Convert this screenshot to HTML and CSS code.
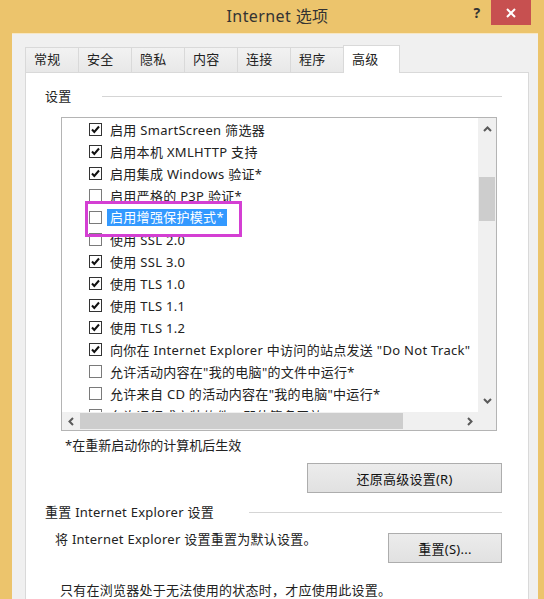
FILE: index.html
```html
<!DOCTYPE html>
<html lang="zh-CN">

<head>
  <meta charset="UTF-8">
  <title>Internet 选项</title>
  <link rel="stylesheet" href="styles.css">
</head>

<body>
  <div class="window">
    <div class="titlebar">
      <div class="title">Internet 选项</div>
      <div class="help">?</div>
      <div class="close">
        <svg width="10" height="10" viewBox="0 0 10 10"><path d="M1 1 L9 9 M9 1 L1 9" stroke="#fff" stroke-width="2"/></svg>
      </div>
    </div>

    <div class="dialog">
      <div class="tabs">
        <div class="tab">常规</div>
        <div class="tab">安全</div>
        <div class="tab">隐私</div>
        <div class="tab">内容</div>
        <div class="tab">连接</div>
        <div class="tab">程序</div>
        <div class="tab active">高级</div>
      </div>

      <div class="page">
        <!-- 设置 -->
        <div class="legend first">
          <span>设置</span>
          <div class="rule"></div>
        </div>

        <div class="listbox">
          <div class="list-content">
            <div class="row"><span class="check on"></span>启用 SmartScreen 筛选器</div>
            <div class="row"><span class="check on"></span>启用本机 XMLHTTP 支持</div>
            <div class="row"><span class="check on"></span>启用集成 Windows 验证*</div>
            <div class="row"><span class="check"></span>启用严格的 P3P 验证*</div>
            <div class="row"><span class="check"></span><span class="selected">启用增强保护模式*</span></div>
            <div class="row"><span class="check"></span>使用 SSL 2.0</div>
            <div class="row"><span class="check on"></span>使用 SSL 3.0</div>
            <div class="row"><span class="check on"></span>使用 TLS 1.0</div>
            <div class="row"><span class="check on"></span>使用 TLS 1.1</div>
            <div class="row"><span class="check on"></span>使用 TLS 1.2</div>
            <div class="row"><span class="check on"></span>向你在 Internet Explorer 中访问的站点发送 "Do Not Track"</div>
            <div class="row"><span class="check"></span>允许活动内容在"我的电脑"的文件中运行*</div>
            <div class="row"><span class="check"></span>允许来自 CD 的活动内容在"我的电脑"中运行*</div>
            <div class="row"><span class="check"></span>允许运行或安装软件，即使签名无效</div>
            <div class="mark"></div>
          </div>

          <div class="vscroll">
            <div class="arrow">
              <svg width="9" height="6" viewBox="0 0 9 6"><path d="M1 5 L4.5 1.5 L8 5" fill="none" stroke="#5a5a5a" stroke-width="2"/></svg>
            </div>
            <div class="vtrack"><div class="vthumb"></div></div>
            <div class="arrow">
              <svg width="9" height="6" viewBox="0 0 9 6"><path d="M1 1 L4.5 4.5 L8 1" fill="none" stroke="#5a5a5a" stroke-width="2"/></svg>
            </div>
          </div>

          <div class="hscroll">
            <div class="arrow">
              <svg width="6" height="9" viewBox="0 0 6 9"><path d="M5 1 L1.5 4.5 L5 8" fill="none" stroke="#5a5a5a" stroke-width="2"/></svg>
            </div>
            <div class="htrack"><div class="hthumb"></div></div>
            <div class="arrow">
              <svg width="6" height="9" viewBox="0 0 6 9"><path d="M1 1 L4.5 4.5 L1 8" fill="none" stroke="#5a5a5a" stroke-width="2"/></svg>
            </div>
          </div>

          <div class="corner"></div>
        </div>

        <div class="note">*在重新启动你的计算机后生效</div>
        <button class="btn restore">还原高级设置(R)</button>

        <!-- 重置 -->
        <div class="legend second">
          <span>重置 Internet Explorer 设置</span>
          <div class="rule"></div>
        </div>
        <div class="reset-row">
          <div class="reset-text">将 Internet Explorer 设置重置为默认设置。</div>
          <button class="btn reset">重置(S)...</button>
        </div>
        <div class="warn">只有在浏览器处于无法使用的状态时，才应使用此设置。</div>
      </div>
    </div>
  </div>
</body>

</html>
```

FILE: styles.css
```css
body {
  margin: 0;
  background-color: #ecc46c;
  font-family: "Noto Sans", "Noto Sans CJK SC", sans-serif;
  font-size: 13px;
  letter-spacing: 0.25px;
  color: #222;
}

.window {
  width: 544px;
  height: 599px;
  overflow: hidden;
  background-color: #ecc46c;
}

/* title bar */

.titlebar {
  display: flex;
  height: 33px;
  padding-right: 13px;
}

.title {
  flex: 1;
  padding-left: 92px;
  text-align: center;
  line-height: 33px;
  font-size: 16px;
  letter-spacing: 0.4px;
  color: #333;
}

.help {
  width: 28px;
  line-height: 25px;
  text-align: center;
  font-weight: bold;
  font-size: 14px;
  color: #333;
}

.close {
  width: 40px;
  height: 25px;
  background-color: #c75050;
  display: flex;
  align-items: center;
  justify-content: center;
}

/* dialog body */

.dialog {
  margin: 0 6px 0 12px;
  height: 566px;
  background-color: #f0f0f0;
  padding: 11px 9px 0 13px;
  border-top: 1px solid #f7e7c4;
}

.tabs {
  display: flex;
  align-items: flex-end;
  height: 27px;
  position: relative;
  z-index: 1;
}

.tab {
  box-sizing: border-box;
  width: 54px;
  height: 25px;
  margin-left: -1px;
  padding-left: 8px;
  line-height: 23px;
  border: 1px solid #d9d9d9;
  border-bottom: none;
  background: linear-gradient(#f2f2f2, #e8e8e8);
  color: #222;
}

.tab:first-child {
  margin-left: 0;
}

.tab.active {
  width: 57px;
  height: 28px;
  margin-bottom: -1px;
  background: #fff;
  line-height: 26px;
}

.page {
  height: 600px;
  background-color: #fff;
  border: 1px solid #d9d9d9;
  padding: 0 26px 0 19px;
}

/* group headings */

.legend {
  display: flex;
  align-items: center;
  height: 18px;
  line-height: 18px;
}

.legend .rule {
  flex: 1;
  height: 1px;
  background-color: #d5d5d5;
}

.legend.first {
  margin-top: 14px;
}

.legend.first .rule {
  margin-left: 30px;
}

.legend.second {
  margin-top: 10px;
}

.legend.second .rule {
  margin-left: 35px;
}

/* settings list */

.listbox {
  display: grid;
  grid-template-columns: 1fr 18px;
  grid-template-rows: 1fr 18px;
  width: 436px;
  height: 314px;
  box-sizing: border-box;
  margin: 12px 0 0 16px;
  border: 1px solid #b4b4b4;
}

.list-content {
  position: relative;
  overflow: hidden;
}

.row {
  display: flex;
  align-items: center;
  height: 22px;
  padding-left: 27px;
  white-space: nowrap;
  letter-spacing: 0.3px;
}

.check {
  box-sizing: border-box;
  width: 13px;
  height: 13px;
  margin-right: 8px;
  border: 1px solid #7a7a7a;
  background: #fff;
  flex-shrink: 0;
}

.check.on {
  border-color: #333;
  background: #fff url("data:image/svg+xml,%3Csvg xmlns='http://www.w3.org/2000/svg' width='11' height='11' viewBox='0 0 11 11'%3E%3Cpath d='M2 5.5 L4.3 8 L9 2.5' fill='none' stroke='%23111' stroke-width='2'/%3E%3C/svg%3E") no-repeat center;
}

.selected {
  margin-left: -3px;
  padding: 0 3px;
  line-height: 17px;
  background-color: #3399ff;
  color: #fff;
}

.mark {
  position: absolute;
  left: 23px;
  top: 83px;
  width: 157px;
  height: 36px;
  box-sizing: border-box;
  border: 3px solid #d43fd3;
}

.vscroll {
  display: flex;
  flex-direction: column;
  background-color: #f0f0f0;
}

.vscroll .arrow {
  height: 22px;
  display: flex;
  align-items: center;
  justify-content: center;
}

.vtrack {
  flex: 1;
}

.vthumb {
  margin: 37px 1px 0;
  height: 44px;
  background-color: #cdcdcd;
}

.hscroll {
  display: flex;
  background-color: #f0f0f0;
}

.hscroll .arrow {
  width: 17px;
  display: flex;
  align-items: center;
  justify-content: center;
}

.htrack {
  flex: 1;
  display: flex;
  align-items: center;
}

.hthumb {
  margin-left: 1px;
  width: 323px;
  height: 16px;
  background-color: #cdcdcd;
}

.corner {
  background-color: #f0f0f0;
}

.note {
  margin: 5px 0 0 20px;
  line-height: 18px;
  letter-spacing: 0;
}

/* buttons */

.btn {
  display: block;
  box-sizing: border-box;
  height: 30px;
  font-family: inherit;
  font-size: 13px;
  letter-spacing: 0.25px;
  color: #111;
  border: 1px solid #adadad;
  background: linear-gradient(#ececec, #e1e1e1);
}

.btn.restore {
  width: 195px;
  margin: 9px 0 0 auto;
}

.reset-row {
  display: flex;
  align-items: flex-start;
  margin-top: 12px;
  padding-left: 10px;
}

.reset-text {
  flex: 1;
  margin-top: -3px;
  line-height: 18px;
}

.btn.reset {
  width: 114px;
}

.warn {
  margin-top: 18px;
  padding-left: 15px;
  line-height: 18px;
}
```
